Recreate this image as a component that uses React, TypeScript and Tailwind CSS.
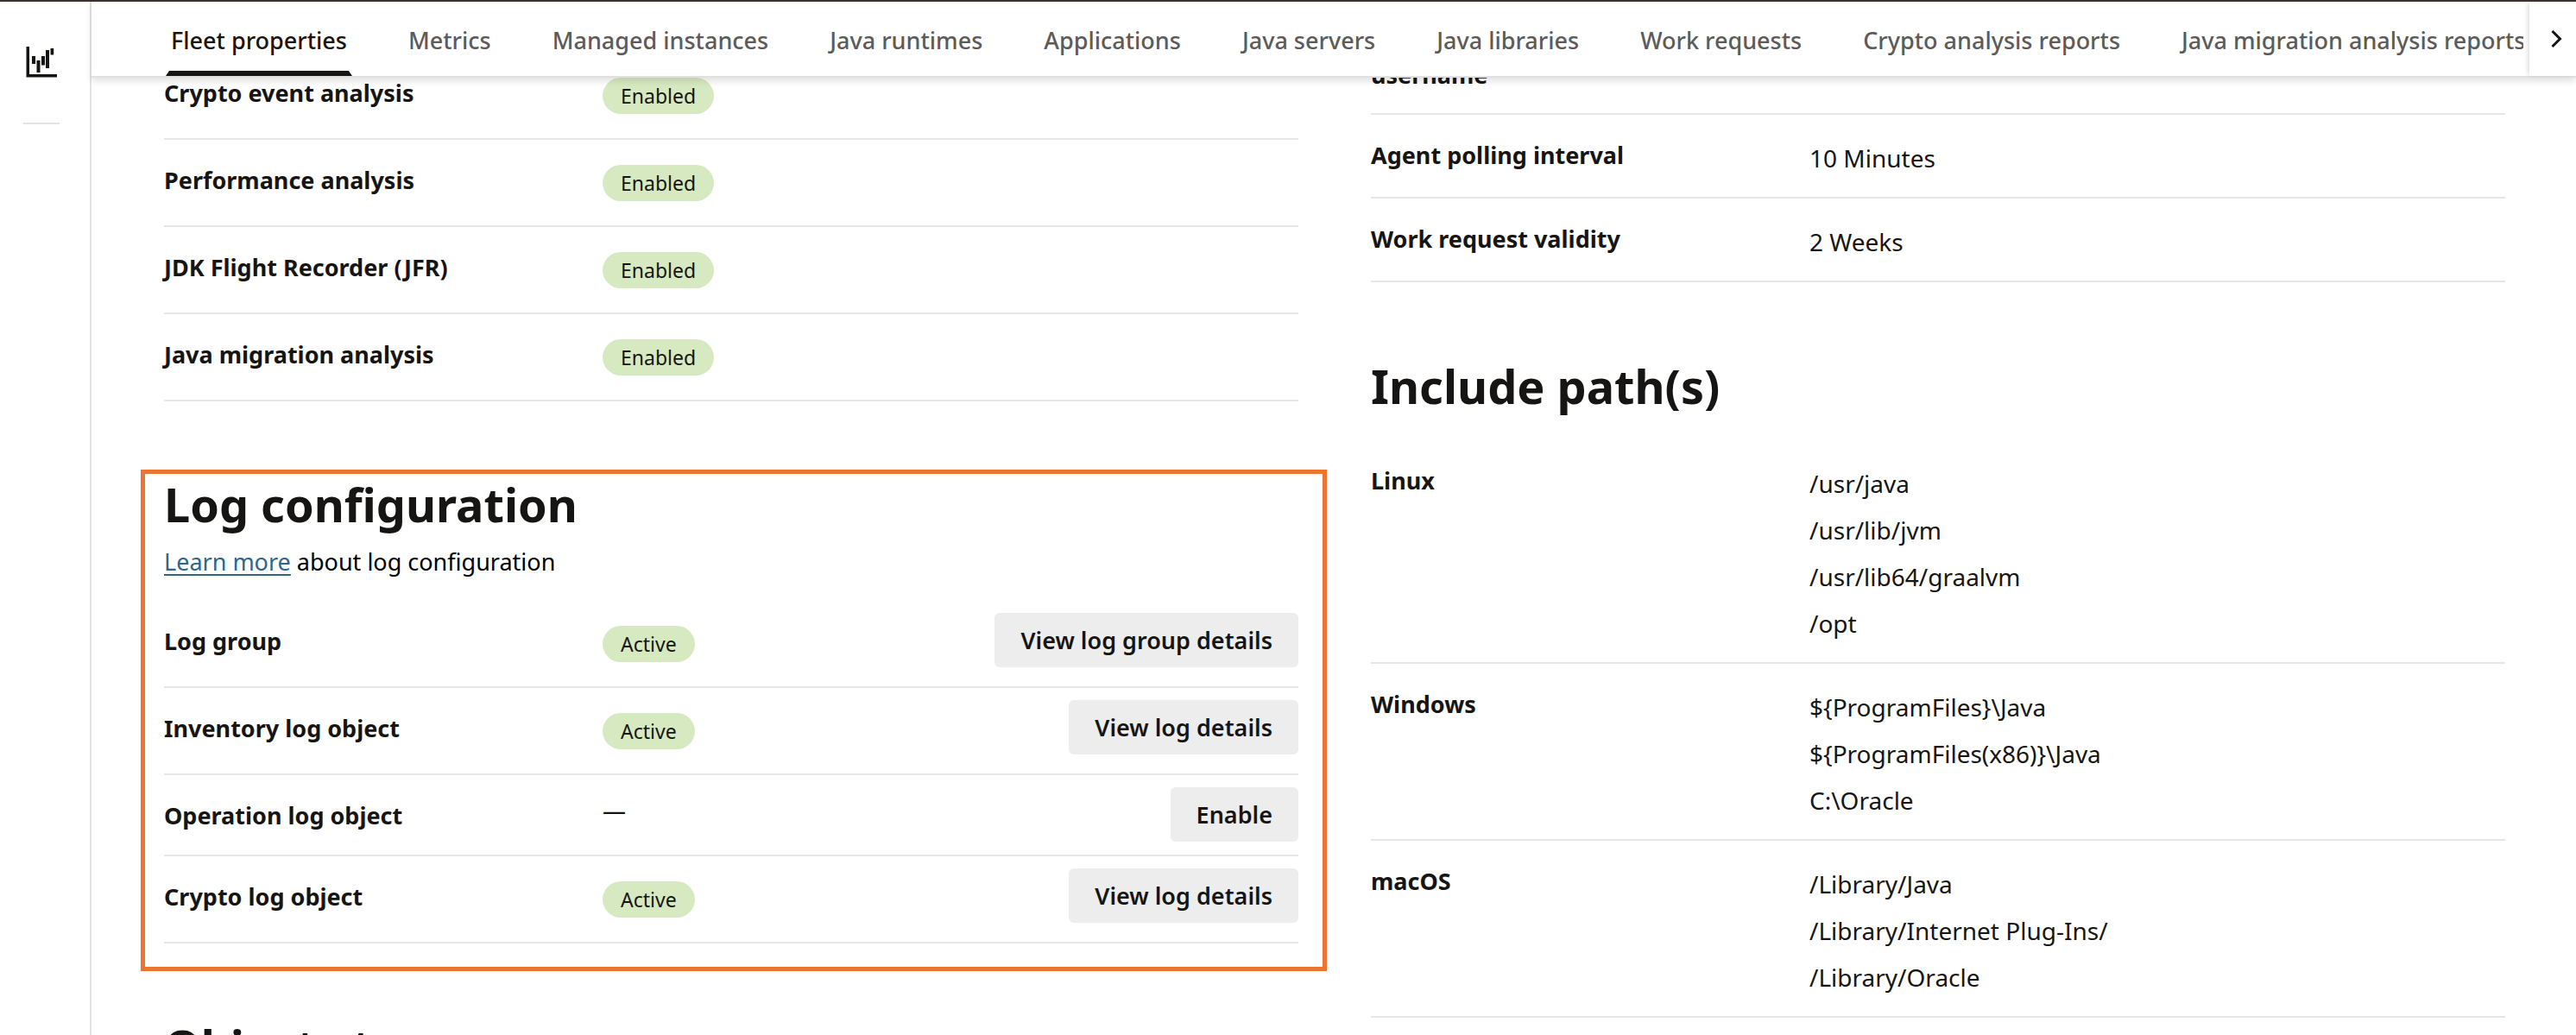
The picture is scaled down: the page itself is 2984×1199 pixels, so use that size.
import React from "react";

const tabs = [
  "Fleet properties",
  "Metrics",
  "Managed instances",
  "Java runtimes",
  "Applications",
  "Java servers",
  "Java libraries",
  "Work requests",
  "Crypto analysis reports",
  "Java migration analysis reports",
];

const features = [
  "Crypto event analysis",
  "Performance analysis",
  "JDK Flight Recorder (JFR)",
  "Java migration analysis",
];

const logs = [
  { label: "Log group", active: true, action: "View log group details" },
  { label: "Inventory log object", active: true, action: "View log details" },
  { label: "Operation log object", active: false, action: "Enable" },
  { label: "Crypto log object", active: true, action: "View log details" },
];

const agentSettings = [
  { label: "Agent polling interval", values: ["10 Minutes"] },
  { label: "Work request validity", values: ["2 Weeks"] },
];

const includePaths = [
  { label: "Linux", values: ["/usr/java", "/usr/lib/jvm", "/usr/lib64/graalvm", "/opt"] },
  { label: "Windows", values: ["${ProgramFiles}\\Java", "${ProgramFiles(x86)}\\Java", "C:\\Oracle"] },
  { label: "macOS", values: ["/Library/Java", "/Library/Internet Plug-Ins/", "/Library/Oracle"] },
];

function ChartIcon() {
  return (
    <svg viewBox="0 0 36 36" className="h-9 w-9" fill="#161513" aria-hidden="true">
      <path d="M0.5 0H4V32H36V35.5H0.5Z" />
      <path d="M7 11h4v9H7zM12.5 16h4v14h-4zM18 11h4v10.500h-4zM23 4h4v21h-4zM28.500 2h3.700v7.500h-3.700z" />
    </svg>
  );
}

function Badge({ children }: { children: React.ReactNode }) {
  return (
    <span className="mt-[29px] mb-7 block w-fit rounded-full bg-[#d7e9c1] px-[21px] text-[23px] leading-[42px]">
      {children}
    </span>
  );
}

function Row({ label, children }: { label: string; children?: React.ReactNode }) {
  return (
    <div className="grid grid-cols-[508px_1fr] border-b-2 border-[#e6e6e6]">
      <dt className="pt-[29px] leading-9 font-bold">{label}</dt>
      <dd className="flex items-start justify-between">{children}</dd>
    </div>
  );
}

function ValueRow({ label, values }: { label: string; values: string[] }) {
  return (
    <Row label={label}>
      <ul className="pt-[23px] pb-[18px] text-[28px] leading-[54px]">
        {values.map((value) => (
          <li key={value}>{value}</li>
        ))}
      </ul>
    </Row>
  );
}

function Heading({ children }: { children: React.ReactNode }) {
  return <h2 className="text-[54px] leading-[70px] font-bold">{children}</h2>;
}

export default function App() {
  return (
    <div className="flex h-screen overflow-hidden border-t-2 border-[#3b3230] bg-white font-['Noto_Sans',sans-serif] text-[27px] text-[#161513]">
      <aside className="flex w-[106px] shrink-0 flex-col items-center border-r-2 border-[#e3e3e3] pr-2 pt-[52px]">
        <button type="button" aria-label="Dashboards">
          <ChartIcon />
        </button>
        <hr className="mt-[52px] w-[42px] border-t-2 border-[#e3e3e3]" />
      </aside>

      <div className="min-w-0 flex-1">
        <header className="relative z-10 flex border-b-2 border-[#e0e0e0] bg-white shadow-[0_4px_8px_rgba(0,0,0,0.12)]">
          <nav className="mr-[7px] flex min-w-0 flex-1 gap-[59px] overflow-hidden pl-[86px]" role="tablist">
            {tabs.map((tab, index) => (
              <button
                key={tab}
                type="button"
                role="tab"
                aria-selected={index === 0}
                className={
                  index === 0
                    ? "flex shrink-0 flex-col font-medium whitespace-nowrap"
                    : "flex shrink-0 flex-col font-medium whitespace-nowrap text-[#5d5b59]"
                }
              >
                <span className="px-1.5 pt-[9px] leading-[71px]">{tab}</span>
                {index === 0 && (
                  <span className="h-1.5 w-full bg-[#161513] [clip-path:polygon(4px_0,calc(100%_-_4px)_0,100%_100%,0_100%)]" />
                )}
              </button>
            ))}
          </nav>
          <button
            type="button"
            aria-label="Next tabs"
            className="flex w-[54px] shrink-0 items-center justify-center pr-4 pl-6 shadow-[-3px_0_6px_-2px_rgba(0,0,0,0.18)]"
          >
            <svg viewBox="0 0 14 22" className="h-[22px] w-3.5" fill="none" stroke="#161513" strokeWidth="3" aria-hidden="true">
              <path d="M2.500 2 11.500 11 2.500 20" />
            </svg>
          </button>
        </header>

        <main className="-mt-[29px] grid grid-cols-2 gap-[84px] pr-[82px] pl-[84px]">
          <div>
            <dl>
              {features.map((feature) => (
                <Row key={feature} label={feature}>
                  <Badge>Enabled</Badge>
                </Row>
              ))}
            </dl>

            <section className="mt-[79px] -mr-[33px] -ml-[27px] border-[5px] border-[#ed7430] pr-7 pb-[27px] pl-[22px]">
              <Heading>Log configuration</Heading>
              <p className="mt-3 mb-[25px] leading-10 text-black">
                <a href="#log-configuration" className="text-[#2b678c] underline decoration-2 underline-offset-4">
                  Learn more
                </a>{" "}
                about log configuration
              </p>
              <dl>
                {logs.map(({ label, active, action }) => (
                  <Row key={label} label={label}>
                    {active ? <Badge>Active</Badge> : <span className="pt-[23px] leading-9">—</span>}
                    <button
                      type="button"
                      className="mt-3.5 mb-[15px] rounded-md bg-[#ededed] px-[30px] leading-[63px] font-semibold"
                    >
                      {action}
                    </button>
                  </Row>
                ))}
              </dl>
            </section>

            <section className="mt-[52px]">
              <Heading>Object storage</Heading>
            </section>
          </div>

          <div>
            <dl>
              <div className="border-b-2 border-[#e6e6e6] pt-2 pb-[26px]">
                <dt className="leading-9 font-bold">username</dt>
              </div>
              {agentSettings.map((row) => (
                <ValueRow key={row.label} {...row} />
              ))}
            </dl>

            <section className="mt-[85px]">
              <Heading>Include path(s)</Heading>
              <dl className="mt-[28px]">
                {includePaths.map((row) => (
                  <ValueRow key={row.label} {...row} />
                ))}
              </dl>
            </section>
          </div>
        </main>
      </div>
    </div>
  );
}
